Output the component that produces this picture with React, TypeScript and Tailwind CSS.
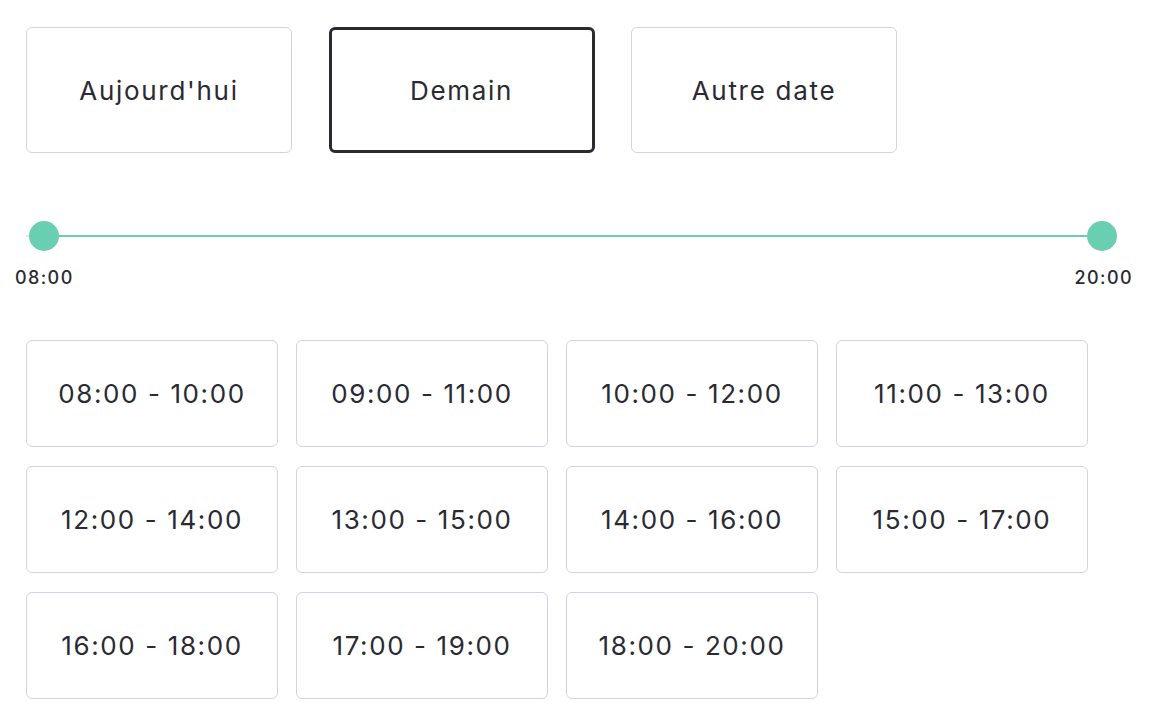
const days = ["Aujourd'hui", 'Demain', 'Autre date'];
const slots = [
  '08:00 - 10:00',
  '09:00 - 11:00',
  '10:00 - 12:00',
  '11:00 - 13:00',
  '12:00 - 14:00',
  '13:00 - 15:00',
  '14:00 - 16:00',
  '15:00 - 17:00',
  '16:00 - 18:00',
  '17:00 - 19:00',
  '18:00 - 20:00',
];

const selectedDay = 1;

export default function App() {
  return (
    <div
      className="min-h-screen bg-white text-[#2a2a33] pl-[26px] pt-[27px]"
      style={{ fontFamily: 'Inter, "Noto Sans", sans-serif' }}
    >
      {/* Day picker */}
      <div className="flex gap-[36.5px]">
        {days.map((d, i) => (
          <button
            key={d}
            className={
              i === selectedDay
                ? 'w-[266px] h-[126px] rounded-[6px] border-[3px] border-[#2a2a33] bg-white text-[26px] tracking-[1.7px]'
                : 'w-[266px] h-[126px] rounded-[6px] border border-[#d3d3dd] bg-white text-[26px] tracking-[1.7px]'
            }
          >
            {d}
          </button>
        ))}
      </div>

      {/* Range slider */}
      <div className="w-[1091px] mt-[68px]">
        <div className="flex items-center h-[30px]">
          <div className="w-[3px] h-[2px] bg-[#e4e4ea]" />
          <div className="w-[30px] h-[30px] rounded-full bg-[#6acfb0] shrink-0" />
          <div className="flex-1 h-[2px] bg-[#6acfb0]" />
          <div className="w-[30px] h-[30px] rounded-full bg-[#6acfb0] shrink-0" />
        </div>
        <div className="flex justify-between -ml-[11px] mr-[-16px] mt-[13px] text-[18px] leading-[27px] font-medium tracking-[1.4px]">
          <span>08:00</span>
          <span>20:00</span>
        </div>
      </div>

      {/* Time slots */}
      <div className="grid grid-cols-[repeat(4,252px)] gap-x-[18px] gap-y-[19px] mt-[49px]">
        {slots.map((s) => (
          <button
            key={s}
            className="h-[107px] rounded-[6px] border border-[#d3d3dd] bg-white text-[26px] tracking-[1.6px]"
          >
            {s}
          </button>
        ))}
      </div>
    </div>
  );
}
